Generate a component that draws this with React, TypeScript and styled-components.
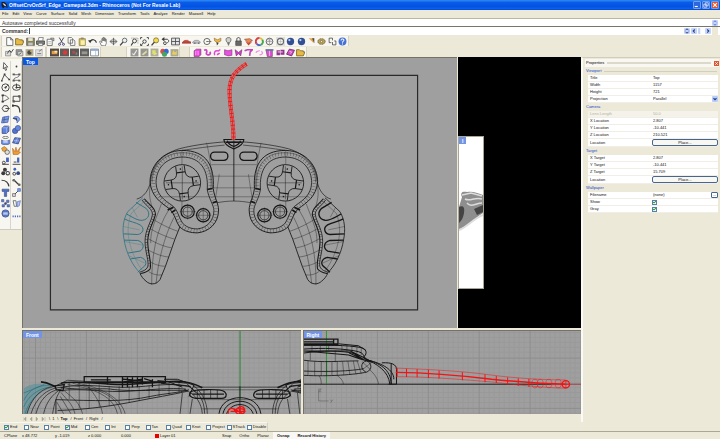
import React from "react";
import styled, { createGlobalStyle, css } from "styled-components";

const BEIGE = "#ece9d8";
const GREY = "#9f9f9f";
const INK = "#161616";

const Global = createGlobalStyle`
  * { box-sizing: border-box; }
  html, body, #root { height: 100%; margin: 0; }
  body { background: ${BEIGE}; overflow: hidden; }
  body, button, input, select {
    font-family: "Liberation Sans", Arial, sans-serif;
    font-size: 4px;
    line-height: 6px;
    color: #111;
  }
  button, input, select { margin: 0; padding: 0; border: 0; background: none; border-radius: 0; }
`;

const Window = styled.div`
  height: 100vh;
  display: flex;
  flex-direction: column;
  background: ${BEIGE};
`;

const TitleBar = styled.header`
  height: 10px;
  flex: none;
  display: flex;
  align-items: center;
  gap: 1px;
  padding: 0 1px;
  background: linear-gradient(#2f8cf5 0, #0a5be8 25%, #0453e0 65%, #0a62f4 90%, #0440b8);
  h1 {
    flex: 1;
    margin: 0;
    font-size: 5px;
    font-weight: bold;
    line-height: 8px;
    color: #fff;
    white-space: nowrap;
  }
`;

const CaptionButton = styled.button<{ $danger?: boolean }>`
  width: 8px;
  height: 8px;
  display: grid;
  border: 1px solid #6f9df0;
  border-radius: 1px;
  background: ${(p) => (p.$danger ? "#e2512b" : "#2f66dc")};
`;

const MenuBar = styled.nav`
  height: 8px;
  flex: none;
  display: flex;
  align-items: center;
  gap: 4px;
  padding: 0 2px;
  button { white-space: nowrap; }
`;

const CommandLine = styled.div<{ $bold?: boolean }>`
  height: ${(p) => (p.$bold ? 9 : 8)}px;
  flex: none;
  display: flex;
  align-items: center;
  gap: 1px;
  padding: 0 2px;
  background: #fff;
  border-top: 1px solid ${(p) => (p.$bold ? "#77756c" : "#b9b6a6")};
  font-size: 5px;
  color: #333;
  label { font-weight: bold; }
  input { flex: 1; min-width: 0; height: 6px; font-size: 5px; border-left: 1px solid #444; outline: none; }
  p { flex: 1; margin: 0; }
`;

const SpinButton = styled.button`
  width: 6px;
  height: 6px;
  display: grid;
  border-radius: 1px;
  background: #c4d4fb;
`;

const ToolRow = styled.div`
  height: 11px;
  flex: none;
  display: flex;
  padding-left: 1px;
`;

const ToolStrip = styled.div<{ $count: number; $width: number; $after?: number }>`
  width: ${(p) => p.$width}px;
  height: 10px;
  margin: 1px ${(p) => p.$after ?? 0}px 0 0;
  padding-left: 2px;
  display: grid;
  grid-template-columns: repeat(${(p) => p.$count}, 1fr);
  align-items: center;
  background: #f7f6f1;
  border-left: 1px solid #d6d3c3;
  border-right: 1px solid #d6d3c3;
`;

const ToolButton = styled.button`
  display: grid;
  place-items: center;
  svg { width: 9px; height: 9px; display: block; opacity: 0.88; }
`;

const Main = styled.main`
  flex: 1;
  min-height: 0;
  display: flex;
`;

const Palette = styled.aside`
  width: 22px;
  flex: none;
  align-self: flex-start;
  display: grid;
  grid-template-columns: 1fr 1fr;
  grid-auto-rows: 21px;
  margin-top: 2px;
  padding-top: 2px;
  background: #f7f6f1;
  border-bottom: 1px solid #cfccbc;
`;

const PalettePair = styled.div`
  display: grid;
  grid-template-rows: 11px 10px;
  border-right: 1px solid #d9d6c8;
`;

const Center = styled.section`
  flex: 1;
  min-width: 0;
  display: flex;
  flex-direction: column;
`;

const UpperViews = styled.div`
  flex: 272;
  min-height: 0;
  display: grid;
  grid-template-columns: 435fr 123fr;
  gap: 1px;
`;

const LowerViews = styled.div`
  flex: 84;
  min-height: 0;
  margin-top: 2px;
  display: grid;
  grid-template-columns: 1fr 1fr;
  gap: 2px;
`;

const Viewport = styled.div`
  position: relative;
  min-width: 0;
  min-height: 0;
  overflow: hidden;
  background: ${GREY};
  border-top: 1px solid #747267;
  border-left: 1px solid #747267;
  > svg { display: block; width: 100%; height: 100%; }
`;

const ViewLabel = styled.button<{ $active?: boolean }>`
  position: absolute;
  top: 0;
  left: 0;
  height: 7px;
  padding: 0 3px;
  background: ${(p) => (p.$active ? "#0a57e2" : "#7394e4")};
  color: #fff;
  font-size: 5px;
  font-weight: bold;
`;

const Backdrop = styled.div`
  background: #000;
  padding-top: 79px;
`;

const RenderView = styled(Viewport)`
  width: 26px;
  height: 153px;
  background: #fff;
  border: 1px solid #aaa695;
`;

const SheetTabs = styled.div`
  height: 8px;
  flex: none;
  display: flex;
  align-items: center;
  gap: 2px;
  padding: 1px 0 0 1px;
  svg { width: 24px; height: 4px; }
  button { padding-right: 1px; }
  button[aria-selected="true"] { font-weight: bold; }
`;

const Panel = styled.aside`
  width: 139px;
  flex: none;
  padding: 1px 1px 0 2px;
  border-left: 2px solid #fbfaf6;
  border-top: 1px solid #d0cdbc;
`;

const PanelHead = styled.header`
  height: 8px;
  display: flex;
  align-items: center;
  gap: 3px;
  padding-left: 1px;
  background: #f8f7f2;
  h2 { margin: 0; font-size: 4px; font-weight: normal; color: #000; }
  span { flex: 1; height: 2px; background: #dcd9cc; }
`;

const CloseButton = styled.button`
  width: 5px;
  height: 5px;
  display: grid;
  background: #dd5433;
`;

const Section = styled.fieldset`
  margin: 0;
  padding: 0 0 0 3px;
  border: 0;
  min-width: 0;
`;

const SectionTitle = styled.legend<{ $ruled?: boolean }>`
  display: flex;
  align-items: center;
  gap: 2px;
  width: 100%;
  height: 8px;
  padding: 0;
  margin-left: -2px;
  color: #1848cc;
  ${(p) => p.$ruled && css`&::after { content: ""; flex: 1; height: 1px; background: #d3cfbe; }`}
`;

const PropRow = styled.div<{ $tall?: boolean; $muted?: boolean }>`
  height: ${(p) => (p.$tall ? 8 : 7)}px;
  display: grid;
  grid-template-columns: 62px 1fr;
  align-items: center;
  padding-left: 2px;
  margin-right: 1px;
  background: ${(p) => (p.$muted ? "#f4f2e9" : "#fff")};
  border-bottom: 1px solid #f0eee6;
  white-space: nowrap;
  input[type="text"] { width: 100%; height: 6px; outline: none; padding-left: 1px; }
  ${(p) => p.$muted && css`&, input { color: #b5b2a4; }`}
`;

const PlaceButton = styled.button`
  height: 7px;
  border: 1px solid #46658f;
  border-radius: 2px;
  background: #f8f7f2;
  line-height: 4px;
`;

const SelectBox = styled.div`
  display: flex;
  align-items: center;
  select { flex: 1; height: 6px; appearance: none; padding-left: 1px; outline: none; }
  svg { width: 6px; height: 6px; background: #b9cdfa; border-radius: 1px; }
`;

const FileBox = styled.div`
  display: flex;
  align-items: center;
  button { width: 7px; height: 6px; flex: none; border: 1px solid #46658f; border-radius: 1px; line-height: 2px; }
`;

const Tick = styled.input.attrs({ type: "checkbox" })`
  appearance: none;
  width: 5px;
  height: 5px;
  margin: 0;
  flex: none;
  border: 1px solid #5580ac;
  background: #fff;
  &:checked::before {
    content: "";
    display: block;
    width: 3px;
    height: 3px;
    background: #1c9a25;
    clip-path: polygon(0 30%, 35% 60%, 100% 0, 100% 45%, 35% 100%, 0 75%);
  }
`;

const SnapBar = styled.div`
  width: 268px;
  height: 9px;
  flex: none;
  display: grid;
  grid-template-columns: repeat(13, 1fr);
  align-items: center;
  padding: 0 0 0 4px;
  border-top: 1px solid #f8f7f2;
  border-right: 1px solid #d5d2c1;
  label { display: flex; align-items: center; gap: 1px; white-space: nowrap; }
`;

const StatusBar = styled.footer`
  height: 8px;
  flex: none;
  display: flex;
  align-items: center;
  padding-left: 4px;
  border-top: 1px solid #aaa797;
`;

const StatusCell = styled.span<{ $width: number }>`
  width: ${(p) => p.$width}px;
  display: flex;
  align-items: center;
  gap: 1px;
  white-space: nowrap;
`;

const Swatch = styled.i`
  width: 4px;
  height: 4px;
  background: #e80000;
`;

const StatusToggle = styled.button<{ $on?: boolean }>`
  height: 7px;
  padding: 0 4px;
  font-weight: ${(p) => (p.$on ? "bold" : "normal")};
  background: ${(p) => (p.$on ? "#f9f8f4" : "transparent")};
`;

/* ---------- icons, all on a 16 x 16 field ---------- */

const K = "#222";
const B = "#2c50b8";
const ln = { fill: "none", stroke: K, strokeWidth: 1.6 } as const;

const icons: Record<string, React.ReactNode> = {
  new: <path d="M3 1h7l4 4v10H3zM10 1v4h4" fill="#fff" stroke="#444" strokeWidth="1.4" />,
  open: <path d="M1 13V3h5l2 2h5v2h3l-3 7H1z" fill="#e3b32e" stroke="#5c4300" strokeWidth="1.3" />,
  save: <><path d="M1 2h14v13H1z" fill="#7a7446" stroke="#333" /><path d="M4 2h8v5H4z" fill="#e8e6d0" /><path d="M4 10h8v5H4z" fill="#bbb" /></>,
  print: <><path d="M4 6l1-5h8l-1 5" fill="#fff" stroke={K} /><path d="M1 7h14v6H1z" fill="#777" stroke={K} strokeWidth="1.4" /><path d="M4 11h8v4H4z" fill="#eee" stroke={K} /></>,
  doc: <><path d="M2 4h9v11H2z" fill="#fff" stroke="#444" strokeWidth="1.4" /><path d="M8 2h6v5l-3-2z" fill="#ccc" stroke={K} /><path d="M4 8h5M4 11h5" stroke="#888" /></>,
  cut: <><path d="M4 1l6 10M12 1L6 11" {...ln} stroke="#223" /><circle cx="4.500" cy="13" r="1.800" {...ln} stroke="#226" /><circle cx="11.500" cy="13" r="1.800" {...ln} stroke="#226" /></>,
  copy: <path d="M2 1h6l2 2v8H2zM6 5h6l2 2v8H6z" fill="#fff" stroke="#444" strokeWidth="1.3" />,
  paste: <><path d="M2 3h11v12H2z" fill="#d8bd3c" stroke="#5b4a0b" /><path d="M5 1h5v3H5z" fill="#777" /><path d="M5 6h7v8H5z" fill="#f8f0a8" /></>,
  undo: <><path d="M4 8c3-5 9-4 11 2" {...ln} strokeWidth="2.200" /><path d="M0 6l7-1-3 6z" fill={K} /></>,
  pan: <path d="M4 15L1 8l2-1 2 3V3h2v4-6h2v6-5h2v6-4h2v7l-2 5z" fill="#fff" stroke="#333" strokeWidth="1.1" />,
  rotate: <><path d="M8 2v12M2 8h12" {...ln} strokeWidth="1.100" /><ellipse cx="8" cy="8" rx="6" ry="3" {...ln} strokeWidth="1.100" /><path d="M6 4h4L8 1zM6 12h4l-2 3z" fill="#555" /></>,
  zoom: <><circle cx="10" cy="6" r="4" fill="#e6f0fa" stroke="#444" strokeWidth="1.5" /><path d="M7 9l-5 6" {...ln} strokeWidth="2.200" /></>,
  zoomw: <><circle cx="8" cy="7" r="3.500" {...ln} /><path d="M5 10l-3 5" {...ln} strokeWidth="2" /><path d="M2 2h12v10" fill="none" stroke="#555" strokeDasharray="2 1" /></>,
  zoome: <><circle cx="8" cy="8" r="3" {...ln} /><path d="M1 4V1h3M12 1h3v3M15 12v3h-3M4 15H1v-3M6 10l-4 5" {...ln} /></>,
  zooms: <><circle cx="9" cy="6" r="4.500" fill="#f4d73c" stroke="#6b5a16" strokeWidth="1.400" /><path d="M6 9l-5 6" {...ln} strokeWidth="2.200" /></>,
  back: <><path d="M3 4h8c4 1 3 6 0 6" {...ln} /><path d="M6 0L1 4l5 4z" fill={K} /><circle cx="7" cy="11" r="2.500" {...ln} /></>,
  grid: <path d="M1 2h14v12H1zM8 2v12M1 8h14" fill="#dfe3ea" stroke="#333" strokeWidth="1.5" />,
  car: <path d="M0 11l2-3 3-2h5l3 2 3 1v2z" fill="#c72a1d" stroke="#701109" />,
  layers: <><path d="M1 9l4-3h6l4 3-2 2H2z" fill="#bbb" stroke="#778" strokeWidth="1.200" /><circle cx="5" cy="11" r="1.500" fill="#667" /><circle cx="12" cy="11" r="1.500" fill="#667" /></>,
  circ: <><circle cx="7" cy="8" r="5.500" {...ln} strokeWidth="1.300" /><path d="M7 8h8" stroke={K} /><circle cx="7" cy="8" r="1" fill={K} /></>,
  select: <><path d="M2 2l6 3 6-3v5l-6 3-5-3z" fill="#f0b12d" stroke="#7a5410" /><path d="M6 9l1 6 3-4z" fill={K} /></>,
  bulb: <><path d="M8 1c6 0 5 6 2 9H6C3 7 2 1 8 1z" fill="#ccc" stroke="#444" strokeWidth="1.400" /><path d="M6 12h4M7 14h2" {...ln} /></>,
  lock: <><path d="M5 7V4c0-4 6-4 6 0v3" {...ln} /><path d="M3 7h10v8H3z" fill="#555" stroke={K} /></>,
  shade: <><path d="M1 4l7 7 7-5-5-3z" fill="#ef7d37" stroke="#6a1d09" /><path d="M2 7l6 8 7-7-7 3z" fill="#c22a1a" /></>,
  wheel: <g fill="none" strokeWidth="3.500"><path d="M8 2a6 6 0 0 1 5 3" stroke="#e4b422" /><path d="M13 5a6 6 0 0 1-3 9" stroke="#2aa038" /><path d="M10 14a6 6 0 0 1-7-2" stroke="#2b4fd0" /><path d="M3 12a6 6 0 0 1 5-10" stroke="#d6262b" /></g>,
  sphere: <><circle cx="8" cy="8" r="6" fill="#eee" stroke="#444" strokeWidth="1.500" /><path d="M8 2v12M2 8h12M4 4c3 2 5 2 8 0" fill="none" stroke="#777" /></>,
  sphere2: <><path d="M0 0h16v16H0z" fill="#ddd" /><circle cx="8" cy="8" r="5.500" fill="#f5f5f5" stroke="#555" strokeWidth="2" /><path d="M8 3v10M3 8h10" stroke="#aaa" /></>,
  ball: <><circle cx="8" cy="8" r="6.500" fill="#193a86" /><circle cx="6" cy="5.500" r="2" fill="#b8cdf8" /></>,
  spot: <><path d="M3 2h9v9z" fill="#e79b2c" /><path d="M9 2h4v9z" fill="#333" /></>,
  gear: <><ellipse cx="8" cy="8" rx="6.500" ry="5" fill="#b49a45" stroke="#4a3b0c" strokeWidth="1.500" strokeDasharray="2 1" /><circle cx="8" cy="8" r="2" fill="#f3ecd0" stroke="#4a3b0c" /></>,
  dim: <path d="M2 2v8h4M2 2h6v4M8 9v5h6V7h-3" {...ln} strokeWidth="1.300" />,
  help: <><circle cx="8" cy="8" r="7" fill="#2f5fd0" /><path d="M5.500 6c0-4 5.500-3 5 0-.5 1.500-2.500 2-2.500 4M8 11.500v2" fill="none" stroke="#fff" strokeWidth="1.800" /></>,
  cplane: <><path d="M1 6h9v8H1z" fill="#d8d8d8" stroke="#555" /><path d="M4 10l4-6 3 4 4-6" {...ln} /></>,
  cplane2: <><path d="M2 3h10v9H2z" fill="#999" stroke="#333" /><path d="M5 6h9v8H5z" fill="#d4d4d4" stroke="#444" /><path d="M7 12l4-4" {...ln} /></>,
  cplane3: <><path d="M1 2h14v12H1z" fill="#aaa38a" /><circle cx="8" cy="8" r="4" fill="#333" /><path d="M8 5h4v4z" fill="#d5b444" /></>,
  cplane4: <><path d="M1 3h12v11H1z" fill="#ddd" stroke="#999" /><path d="M4 10h7M7 6l6-4" stroke="#666" strokeWidth="1.600" /></>,
  film: <><path d="M0 1h16v14H0z" fill="#3c332b" /><path d="M3 5h10v6H3z" fill="#e29330" /><path d="M8 5h5v3H8z" fill="#f6e5b8" /></>,
  film2: <><path d="M0 1h16v14H0z" fill="#4b4745" /><circle cx="9" cy="8" r="4" fill="#d91f1f" /></>,
  film3: <><path d="M0 1h16v14H0z" fill="#444" /><path d="M4 5h5v5H4z" fill="#a33" /><path d="M10 8h3v4h-3z" fill="#777" /></>,
  film4: <><path d="M0 1h16v14H0z" fill="#4b4b4b" /><path d="M3 6h10v5H3z" fill="#8c8c84" /></>,
  pane: <><path d="M1 2h14v12H1z" fill="#fff" stroke="#567" strokeWidth="1.400" /><path d="M1 2h14v3H1z" fill="#7b9cce" /><path d="M10 5v9" stroke="#89a" /></>,
  tex: <><path d="M1 1h14v14H1z" fill="#8b8b86" /><path d="M4 10l3 2 5-8" fill="none" stroke="#eee" strokeWidth="2" /></>,
  tex2: <><path d="M1 1h14v14H1z" fill="#8b8b80" /><path d="M3 11l9-7v4l-6 5z" fill="#d8d6a2" /></>,
  tex3: <><path d="M1 1h14v14H1z" fill="#a3a391" /><path d="M4 4h6v4l3 2-5 3-4-3z" fill="#dede5e" /></>,
  rgb: <><circle cx="5" cy="6" r="4.500" fill="#d83826" /><circle cx="11" cy="6" r="4.500" fill="#2451cf" /><circle cx="8" cy="11" r="4.500" fill="#2c9a4d" /></>,
  tex4: <><path d="M1 2h14v13H1z" fill="#9f9d89" /><path d="M4 9l2-5 3 4 3-3v7H4z" fill="#e9c941" /></>,
  mA: <><path d="M2 5l4-3h8v10l-3 3H2z" fill="#e627d8" stroke="#5b0b56" /><path d="M5 5v8M9 5v8" stroke="#fff" /></>,
  mB: <path d="M2 4c6-3 5 3 4 5s3 4 5 3 3-3 1-5" fill="none" stroke="#c92ac0" strokeWidth="3" />,
  mC: <path d="M3 13c-2-6 2-9 5-8s3-2 5-2M7 12l5-3" fill="none" stroke="#df2fd2" strokeWidth="2.600" />,
  mD: <path d="M1 3l6 2 7-2v10l-6 1-7-2z" fill="#e93adf" stroke="#6b0f66" />,
  mE: <path d="M2 3l6 5 6-5-2 11-4-4-4 4z" fill="#d12ac8" stroke="#5b0b56" />,
  mG: <path d="M1 5l5-2h9l-4 4-1 7" fill="none" stroke="#bb2bb3" strokeWidth="2.800" />,
  mH: <path d="M2 9c0-5 6-2 6-5M8 12c6 0 7-4 3-6" fill="none" stroke="#f08be8" strokeWidth="2.400" />,
  mI: <><path d="M2 4h11v11H4z" fill="#e03ad4" stroke="#5b0b56" /><path d="M1 2h14v3H1z" fill="#4a6a86" /><path d="M8 5v9" stroke="#f6b5f1" strokeWidth="1.400" /></>,
  mJ: <><path d="M1 4h6v9H1zM8 3h7v9H8z" fill="#861a80" /><path d="M3 7h9" stroke="#f2b9ef" strokeWidth="2" /></>,
  mK: <><path d="M6 2l9 2-5 10-9-3z" fill="#cc37c2" stroke="#5b0b56" strokeWidth="1.500" /><path d="M6 6l4 1-2 3" fill="none" stroke="#f6b5f1" strokeWidth="1.500" /></>,
  arrow: <path d="M5 1l7 8H8l2 5-2 1-2-5-2 2z" fill="#fff" stroke={K} strokeWidth="1.400" />,
  point: <circle cx="8" cy="8" r="1.600" fill={K} />,
  poly: <><path d="M1 14L6 3l8 8" {...ln} /><path d="M5 1h3v3H5zM0 13h3v2H0zM13 10h3v3h-3z" fill={K} /></>,
  curve: <><path d="M3 13C3 6 13 10 13 3M3 3h9M4 13h9" {...ln} strokeWidth="1.200" /><path d="M1 1h4v3H1zM11 1h4v3h-4zM1 12h4v3H1zM11 12h4v3h-4z" fill="#444" /></>,
  circle: <><circle cx="8" cy="8" r="6.500" {...ln} /><path d="M8 8l4-4M7 7h2v2H7z" {...ln} /></>,
  ellipse: <><ellipse cx="8" cy="8" rx="7" ry="5" {...ln} /><path d="M8 1v7h7M7 7h2v2H7z" {...ln} /></>,
  arc: <><path d="M3 2c5 0 9 3 11 6L3 14M3 2v12" {...ln} strokeWidth="1.300" /><path d="M1 1h4v3H1zM1 12h4v3H1z" fill={K} /></>,
  rect: <><path d="M2 4h12v9H2z" {...ln} /><path d="M1 11h4v4H1zM11 2h4v4h-4z" fill="#444" /></>,
  polygon: <><path d="M5 3h6l3 5-3 5H5L2 8z" {...ln} /><path d="M8 8h7" {...ln} /></>,
  fillet: <><path d="M1 3h5c6 0 8 4 8 12" {...ln} strokeWidth="2.200" /><path d="M0 1h3v4H0z" fill={K} /></>,
  surf: <><path d="M3 4l11-2-2 11-11 1z" fill="#6f8fe0" stroke={B} strokeWidth="1.500" /><path d="M6 3L5 14M2 9l11-2" stroke="#1a2b66" /></>,
  surf2: <><path d="M2 6c2-5 11-5 12 2l-5 6V9z" fill="#7d9ae8" stroke={B} strokeWidth="1.400" /><path d="M2 6h6v4" {...ln} /></>,
  box: <><path d="M2 5l4-3h8v9l-4 4H2z" fill="#4a72d8" stroke="#1b2e74" strokeWidth="1.300" /><path d="M2 5h8v10M10 5l4-3" fill="none" stroke="#b9c9f6" /></>,
  balls: <><circle cx="5.500" cy="10.500" r="4.800" fill="#3c62cc" stroke="#152a6b" /><circle cx="10.500" cy="5.500" r="4.800" fill="#5378dc" stroke="#152a6b" /></>,
  cyl: <><ellipse cx="8" cy="2.500" rx="5" ry="2" {...ln} strokeWidth="1.100" /><path d="M1 7c4 3 10 3 14 0v7c-4 2-10 2-14 0z" fill="#5b82e4" stroke="#1d3380" /><path d="M4 9h8v3H4z" fill="#c2d2fa" /></>,
  mesh: <><path d="M5 3l10 1-4 10L1 12z" fill="#4a70d4" stroke="#1a2e72" strokeWidth="1.400" /><path d="M3 8l10 1M10 3L6 13" stroke="#bccbf6" /></>,
  join: <><path d="M1 4l5-3 5 4-3 5-5-1z" fill="#ee9a1c" stroke="#8b5205" /><circle cx="11" cy="11" r="4" fill="#ddd" stroke="#444" strokeWidth="1.400" /></>,
  explode: <path d="M2 15L1 4l4 6 2-8 2 8 6-8-3 8 3 1-4 4z" fill="#f0901a" stroke="#a04a02" />,
  trim: <><path d="M2 13h12" {...ln} /><path d="M9 1h5v8H9z" fill={B} /><circle cx="5" cy="10" r="2.500" {...ln} /></>,
  split: <><path d="M1 13h14M3 9h5" {...ln} /><path d="M9 1h4v9H9z" fill={B} /></>,
  group: <><circle cx="7" cy="5" r="3.500" fill={K} /><circle cx="4" cy="11" r="3.500" fill={K} /><circle cx="12" cy="11" r="3" fill="#fff" stroke={K} strokeWidth="1.800" /></>,
  ungroup: <><circle cx="5" cy="4" r="2.500" fill={B} /><circle cx="4" cy="12" r="2.500" {...ln} /><circle cx="11" cy="11" r="3.300" fill="#1c3176" /></>,
  edit: <path d="M1 4c7 0 12 4 13 11" {...ln} strokeWidth="2.200" />,
  bone: <><path d="M3 3l10 10" {...ln} strokeWidth="2.200" /><circle cx="3" cy="4" r="2.400" fill="#555" /><circle cx="13" cy="12" r="2.400" fill="#555" /></>,
  text: <path d="M2 2h12v4h-4v9H6V6H2z" fill="#345cc8" stroke="#152a6b" />,
  move: <><path d="M5 11l6-6" {...ln} /><path d="M1 10h5v5H1z" fill="#ddd" stroke={K} /><path d="M10 1h5v5h-5z" fill="#6a8de6" stroke={B} /></>,
  array: <g fill="#4a70d4" stroke="#1a2e72"><path d="M1 1h4v4H1zM10 2h4v4h-4zM2 10h4v4H2zM11 10h4v4h-4z" /><circle cx="8" cy="8" r="2" fill="#333" /></g>,
  flip: <><path d="M2 3h5l1 10H4z" fill="#fff" stroke="#444" strokeWidth="1.400" /><path d="M9 5l6-2-2 9-4 2z" fill="#a7bbf0" stroke={B} /></>,
  barrel: <><circle cx="8" cy="8" r="6.500" fill="#4e75da" stroke="#1a2e72" /><path d="M3 5h10v6H3z" fill="#a9bff6" stroke="#1a2e72" /></>,
  points: <path d="M1 13h14" stroke="#2c50b8" strokeWidth="3" strokeDasharray="2 2" />,
};

const Tool = ({ name }: { name: string }) => (
  <ToolButton type="button" aria-label={name}>
    <svg viewBox="0 0 16 16">{icons[name]}</svg>
  </ToolButton>
);

const Strip = ({ names, width, after }: { names: string; width: number; after?: number }) => {
  const list = names.split(" ");
  return (
    <ToolStrip $count={list.length} $width={width} $after={after} role="toolbar">
      {list.map((n, i) => <Tool key={i} name={n} />)}
    </ToolStrip>
  );
};

/* ---------- wireframes ---------- */

const GripShell = ({ color }: { color: string }) => {
  const heavy = color === INK ? 4 : 3;
  return (
    <g stroke={color} fill="none">
      <path d="M290 203L335 245C350 270 352 300 346 330C340 370 320 410 296 432" strokeWidth="2.400" />
      <path d="M283 212L324 250C334 275 336 300 332 326C326 362 310 398 290 424M322 232L306 262M348 290L300 300M346 335L290 346M332 378L284 400" strokeWidth="1" />
      <g strokeWidth={heavy}>
        <path d="M310 217L280 235C265 250 272 268 290 271C305 273 320 262 339 252" />
        <path d="M345 267C330 275 310 278 298 285C282 295 290 312 305 314L348 312" />
        <path d="M346 331L305 332C285 338 284 355 298 364L334 370" />
        <path d="M328 388L297 383C278 388 275 405 290 414L305 428" />
      </g>
    </g>
  );
};

const HalfPad = ({ shell }: { shell: string }) => (
  <g fill="none" stroke={INK} strokeWidth="1.700">
    <path d="M16 33C60 34 130 42 180 55C230 70 262 105 266 150C270 180 288 202 308 207" strokeWidth="2" />
    <path d="M44 44C90 48 130 54 172 60M16 213C35 213 50 215 66 218" />
    <path d="M98 37C88 80 84 110 80 175M60 132C65 170 70 195 72 210" strokeWidth="1.100" />
    <path d="M16 103H84M16 138H80M16 173H80M16 200H240M172 62V104M172 212V236" strokeWidth="1" />
    <path d="M78 175C74 110 95 60 172 60C235 62 268 110 268 155C264 200 235 218 210 236C195 248 190 275 180 290C165 305 145 309 125 309C90 305 62 280 62 240C62 220 74 205 78 175Z" strokeWidth="2.800" />
    <path d="M87 176C83 115 105 70 172 70C230 72 259 114 259 157C256 198 230 214 206 231C190 243 186 268 175 285C160 300 142 303 125 303C92 300 69 275 69 241C69 222 83 205 87 176Z" strokeWidth="11" strokeDasharray="1 8" opacity="0.800" />
    <path d="M96 178C92 120 115 80 172 80C225 82 250 118 250 158C248 195 225 210 202 226C185 238 182 262 170 280C155 295 140 297 125 297C95 294 76 270 76 242C76 225 92 205 96 178Z" strokeWidth="2.400" />
    <path d="M85 176C80 112 104 66 172 67C232 69 262 112 262 157" strokeWidth="1.200" />
    <path d="M80 175L96 178M66 214L80 218M192 240L204 248M198 232L215 240" strokeWidth="5" />
    <rect x="34" y="65" width="52" height="25" rx="12" strokeWidth="4" />
    <circle cx="171" cy="158" r="55" strokeWidth="2.600" />
    <path d="M171 108V208M122 158H220" strokeWidth="1.300" />
    <g transform="rotate(8 171 158)" strokeWidth="2.500">
      <path d="M158 106V124Q158 145 138 145H119M184 106V124Q184 145 204 145H223M158 210V192Q158 171 138 171H119M184 210V192Q184 171 204 171H223" />
      <path d="M158 126H184M158 190H184M139 145V171M203 145V171" strokeWidth="3.600" />
      <path d="M169 114h4v4h-4zM169 198h4v4h-4zM127 156h4v4h-4zM211 156h4v4h-4z" fill={INK} stroke="none" />
    </g>
    {[[108, 256], [155, 245]].map(([x, y]) => (
      <g key={x}>
        <circle cx={x} cy={y} r="20" strokeWidth="3.600" />
        <circle cx={x} cy={y} r="14" strokeWidth="2" />
        <path d={`M${x - 24} ${y}h48M${x} ${y - 24}v48`} strokeWidth="1" />
      </g>
    ))}
    <path d="M178 290C200 340 215 400 238 450C250 468 270 465 280 455C290 447 294 440 298 432" strokeWidth="2.600" />
    <path d="M285 206C270 225 250 235 252 255C258 280 275 300 275 335C275 370 262 400 268 418C275 428 288 430 298 432" strokeWidth="3.200" />
    <path d="M292 210C278 230 259 238 261 255C266 280 283 300 283 335C283 368 270 396 275 412C280 422 290 425 300 428" strokeWidth="2.400" />
    <path d="M288 208C274 227 254 236 256 255C262 280 279 300 279 335C279 369 266 398 271 415" strokeWidth="7" strokeDasharray="1 7" />
    <path d="M196 262C225 320 243 390 250 462M212 240C250 300 264 380 263 466M234 222C248 262 268 300 266 340M185 304C210 296 240 280 256 270M194 328C225 320 255 304 268 296M204 354C232 350 260 334 275 326M212 382C235 380 262 368 274 360M222 410C240 410 260 402 268 396M232 436C246 438 262 434 272 426M266 160C272 190 270 200 262 232" strokeWidth="1.200" />
    <GripShell color={shell} />
  </g>
);

const CABLE = "M246 63C236 69 229 76 229 90C229 106 233 120 233 139";

const TopDrawing = () => (
  <svg viewBox="22 57 435 272" preserveAspectRatio="none">
    <path d="M49.500 74.500H417.500V310.500H49.500Z" fill="none" stroke="#2a2a2a" strokeWidth="1.200" />
    <g transform="translate(228 130) scale(0.3333)">
      <HalfPad shell={INK} />
      <g transform="translate(32 0) scale(-1 1)"><HalfPad shell="#2f7483" /></g>
      <path d="M16 30V213" stroke={INK} strokeWidth="2.600" />
      <path d="M-14 27H46C46 42 30 50 16 56C2 50-14 42-14 27ZM-8 36H40M-4 31C0 42 8 46 16 48C24 46 32 42 36 31" fill="none" stroke={INK} strokeWidth="3.400" />
    </g>
    <g fill="none">
      <path d={CABLE} stroke="#e83030" strokeWidth="4" />
      <path d={CABLE} stroke="#bd7b7b" strokeWidth="2.800" />
      <path d={CABLE} stroke="#f01818" strokeWidth="4" strokeDasharray="1 3" />
      <path d={CABLE} stroke="#f01818" strokeWidth="0.900" />
    </g>
  </svg>
);

const GridLines = ({ id, x }: { id: string; x: number }) => (
  <>
    <defs>
      <pattern id={id} x={x} y="1" width="51" height="51" patternUnits="userSpaceOnUse">
        <path d="M5.500 0V51M10.500 0V51M15.500 0V51M20.500 0V51M25.500 0V51M30.500 0V51M35.500 0V51M40.500 0V51M45.500 0V51M0 5.500H51M0 10.500H51M0 15.500H51M0 20.500H51M0 25.500H51M0 30.500H51M0 35.500H51M0 40.500H51M0 45.500H51" stroke="#999" strokeWidth="1" />
        <path d="M.5 0V51M0 .5H51" stroke="#8d8d8d" strokeWidth="1" />
      </pattern>
    </defs>
    <rect x="0" y="300" width="600" height="130" fill={`url(#${id})`} />
  </>
);

const FrontBody = () => (
  <g fill="none" stroke={INK} strokeWidth="2">
    <path d="M78 285C90 240 120 205 160 202L200 183L250 186M90 285C105 235 140 208 175 205M105 285C115 245 140 215 178 210M128 285C135 250 155 225 180 210M155 285C160 255 165 230 185 205" />
    <path d="M120 188C145 190 150 198 165 203" strokeWidth="5" />
    <path d="M162 200L190 196L186 215L166 212Z" strokeWidth="4" />
    <path d="M250 172H494V190H250ZM320 172V196M365 172V206M425 172V196M455 180V204" strokeWidth="4" />
    <path d="M270 182H330M366 180L425 184M366 188L425 180M380 174V204M395 174V204M410 174V204M430 178L455 186M250 188H494" strokeWidth="4" />
    <path d="M180 192C230 182 300 196 360 196C420 196 480 186 530 186C565 186 585 195 605 206" strokeWidth="5" />
    <path d="M175 205C260 190 330 208 390 204C450 202 500 190 560 200M175 215C240 205 320 222 390 216C450 212 510 205 556 210M180 205C250 215 300 206 330 210C380 218 480 212 560 214" strokeWidth="2.500" />
    <path d="M165 242C280 245 370 250 450 232C500 222 530 222 565 212M170 275C260 272 330 262 410 246C460 236 510 228 562 216M165 242V285" strokeWidth="2.500" />
    <path d="M200 196C255 205 335 220 350 285M215 192C285 210 350 225 362 285M230 192C300 205 360 235 373 285M190 215C220 240 235 250 245 285M180 220C200 245 215 255 222 285M260 200C285 230 300 255 305 285M178 232L210 285M168 250L188 285" strokeWidth="1.500" />
    <path d="M205 188V240M235 188V268M265 188V270M295 196V266M325 200V262M355 200V256M385 200V250M415 200V246M445 198V240M475 192V232M505 188V228M535 188V222" strokeWidth="1.300" />
    <path d="M470 184L560 192M480 192L570 202M490 180H530L580 198L565 232M500 186L545 204M560 195L585 220" strokeWidth="3" />
    <path d="M560 200C590 215 612 240 612 285M575 196C600 215 620 245 620 285M550 210C590 228 602 255 605 285M545 222L538 285M575 240L568 285" />
    <path d="M580 204H718" strokeWidth="2" />
    <path d="M590 212H718M718 202V285M600 242H718M605 270H660" strokeWidth="1.300" />
    <path d="M570 218C580 210 660 208 672 218C680 226 678 238 664 238H585C570 236 562 228 570 218ZM575 225H670" strokeWidth="3.600" />
    <path d="M590 214V238M610 212V238M630 212V238M650 212V238" strokeWidth="2" />
  </g>
);

const FrontDrawing = () => (
  <svg viewBox="22 331 278 84" preserveAspectRatio="none">
    <GridLines id="front-grid" x={34} />
    <path d="M239.500 331V400" stroke="#2d8a34" strokeWidth="1" />
    <g transform="translate(0 320) scale(0.3333)">
      <path d="M68 208C85 195 115 188 148 200C120 208 90 240 80 285H68Z" fill="#4f8f99" opacity="0.550" />
      <path d="M68 245C85 210 110 198 150 198M68 265C80 235 105 210 150 202M72 285C82 250 110 215 155 204M68 222L130 196" fill="none" stroke="#2b7380" strokeWidth="2" />
      <FrontBody />
      <g transform="translate(1436 0) scale(-1 1)"><FrontBody /></g>
      <g fill="none" stroke={INK} strokeWidth="3">
        <path d="M655 285C660 250 690 236 718 236C746 236 776 250 781 285M667 285C672 260 694 247 718 247C742 247 764 260 769 285M678 285C684 268 700 257 718 257C736 257 752 268 758 285" />
      </g>
      <g fill="none" stroke="#f01212" strokeWidth="4">
        <path d="M683 285C680 265 700 264 705 280C708 262 730 258 732 272C734 290 712 290 706 280C690 270 735 262 732 280M700 270L728 285M718 262V285M690 278H735" />
      </g>
    </g>
  </svg>
);

const RightDrawing = () => (
  <svg viewBox="302 331 278 84" preserveAspectRatio="none">
    <GridLines id="right-grid" x={324} />
    <path d="M324.500 331V384" stroke="#2d9a34" strokeWidth="1" />
    <g transform="translate(290 320) scale(0.3333)" fill="none" stroke={INK} strokeWidth="2">
      <path d="M36 195H780" strokeWidth="3" />
      <path d="M780 195H870" stroke="#a33a3a" strokeWidth="3" />
      <path d="M36 58H138V76H36M36 66H125M125 58V76M36 72H138" strokeWidth="4" />
      <path d="M36 76C90 76 170 75 210 84C228 90 224 108 214 112M36 88C90 84 160 86 200 96C212 100 218 106 220 120M140 72L200 78L222 92M36 100C90 92 150 92 190 102" strokeWidth="3" />
      <path d="M36 94H175L220 116L240 128L205 118L170 106ZM172 100L215 120M180 98L222 124" strokeWidth="3.500" />
      <path d="M150 74V92M165 76V96M180 78V98M195 80V102M208 84V106M60 78V96M85 78V94M110 78V92M130 92V128M55 95V122" strokeWidth="1.300" />
      <path d="M36 122C90 130 150 124 200 124M36 168C110 172 190 166 225 158C242 150 240 130 224 124C205 128 205 150 222 158M36 155C110 158 175 155 215 148" strokeWidth="2.600" />
      <path d="M48 124V168M68 126V169M88 126V170M104 126V169M120 126V169M136 126V169C150 178 155 190 154 195M152 126L156 168M168 125L174 167M184 124L192 165M196 124L208 163M82 170C88 178 88 190 88 195M232 150C250 165 258 180 260 195M210 126L235 150M238 130L212 150" strokeWidth="1.300" />
      <path d="M222 120C262 130 298 150 298 195M230 122C270 132 306 150 306 180M215 116C255 132 290 155 294 195M270 130C300 128 314 135 314 150V195M298 132V195M290 195H314" strokeWidth="3" />
      <g stroke="#f51212">
        <path d="M312 146C420 150 520 156 590 166C680 178 760 182 822 182M312 172C420 172 520 182 600 188C680 198 760 206 822 207" strokeWidth="1.500" />
        <path d="M312 159C430 160 520 170 600 180C680 188 750 194 822 195" strokeWidth="4.500" />
        <path d="M316 146V172M344 148V173M376 149V174M410 151V176M442 153V178M512 158V183M580 165V189M614 170V191M648 174V196M680 177V200M712 179V203" strokeWidth="3" />
        {[730, 746, 772, 800].map((x) => <ellipse key={x} cx={x} cy="193" rx="9" ry="13" strokeWidth="1.500" />)}
        <circle cx="823" cy="195" r="11" strokeWidth="4" />
        <path d="M823 182V208M810 195H834" strokeWidth="2" />
      </g>
      <path d="M80 210V246H110M80 210h8l-8 8h8M115 242l4 5 4-5M119 247l-3 5" stroke="#666" strokeWidth="2" />
    </g>
  </svg>
);

const RenderDrawing = () => (
  <svg viewBox="0 0 24 151" preserveAspectRatio="none">
    <path d="M3 60C1 56 3 54 8 55C14 54 18 56 24 58V76C18 80 12 86 7 89C4 91 2 92 0 92V70Z" fill="#8e8e8e" />
    <path d="M0 70C4 68 6 70 5 76C4 82 2 84 0 86ZM15 72l9-4v7l-6 3z" fill="#444" />
    <path d="M3 58l9-2 11 3M6 62c5 3 9-2 17 0M8 66c4 5 9 0 15 0" stroke="#dcdcdc" strokeWidth="1.500" fill="none" />
    <path d="M0 93C8 90 14 82 24 78" stroke="#ddd" strokeWidth="2" fill="none" />
  </svg>
);

/* ---------- properties panel ---------- */

const TextProp = ({ id, label, value, muted }: { id: string; label: string; value: string; muted?: boolean }) => (
  <PropRow $muted={muted}>
    <label htmlFor={id}>{label}</label>
    <input id={id} type="text" defaultValue={value} disabled={muted} />
  </PropRow>
);

const PlaceProp = ({ id }: { id: string }) => (
  <PropRow $tall>
    <label htmlFor={id}>Location</label>
    <PlaceButton id={id} type="button">Place...</PlaceButton>
  </PropRow>
);

const Properties = () => (
  <Panel>
    <PanelHead>
      <h2>Properties</h2>
      <span />
      <CloseButton type="button" aria-label="Close panel">
        <svg viewBox="0 0 8 8"><path d="M2 2l4 4M6 2L2 6" stroke="#fff" strokeWidth="1.400" /></svg>
      </CloseButton>
    </PanelHead>
    <Section>
      <SectionTitle $ruled>Viewport</SectionTitle>
      <TextProp id="title" label="Title" value="Top" />
      <TextProp id="width" label="Width" value="1157" />
      <TextProp id="height" label="Height" value="721" />
      <PropRow>
        <label htmlFor="projection">Projection</label>
        <SelectBox>
          <select id="projection"><option>Parallel</option><option>Perspective</option></select>
          <svg viewBox="0 0 8 8"><path d="M2 3l2 2 2-2" fill="none" stroke="#24407c" strokeWidth="1.500" /></svg>
        </SelectBox>
      </PropRow>
    </Section>
    <Section>
      <SectionTitle>Camera</SectionTitle>
      <TextProp id="lens" label="Lens Length" value="50.0" muted />
      <TextProp id="cx" label="X Location" value="2.807" />
      <TextProp id="cy" label="Y Location" value="-10.441" />
      <TextProp id="cz" label="Z Location" value="210.521" />
      <PlaceProp id="camera-place" />
    </Section>
    <Section>
      <SectionTitle>Target</SectionTitle>
      <TextProp id="tx" label="X Target" value="2.807" />
      <TextProp id="ty" label="Y Target" value="-10.441" />
      <TextProp id="tz" label="Z Target" value="15.709" />
      <PlaceProp id="target-place" />
    </Section>
    <Section>
      <SectionTitle>Wallpaper</SectionTitle>
      <PropRow>
        <label htmlFor="file">Filename</label>
        <FileBox>
          <input id="file" type="text" defaultValue="(none)" />
          <button type="button" aria-label="Browse">...</button>
        </FileBox>
      </PropRow>
      <PropRow><label htmlFor="show">Show</label><Tick id="show" defaultChecked /></PropRow>
      <PropRow><label htmlFor="gray">Gray</label><Tick id="gray" defaultChecked /></PropRow>
    </Section>
  </Panel>
);

const MENUS = ["File", "Edit", "View", "Curve", "Surface", "Solid", "Mesh", "Dimension", "Transform", "Tools", "Analyze", "Render", "Maxwell", "Help"];
const SNAPS = ["End", "Near", "Point", "Mid", "Cen", "Int", "Perp", "Tan", "Quad", "Knot", "Project", "STrack", "Disable"];
const PALETTE = ["arrow point poly curve", "circle ellipse arc rect", "polygon fillet surf surf2", "box balls cyl mesh", "join explode trim split", "group ungroup edit bone", "text move array flip", "barrel points"];

export default function App() {
  return (
    <Window>
      <Global />
      <TitleBar>
        <svg width="7" height="8" viewBox="0 0 14 16"><path d="M1 2h6l5 5 1 7-5-3-4 4-3-6z" fill="#1d1d1d" /><path d="M3 4l5 2 3 5-5-2z" fill="#ddd" /></svg>
        <h1>OffsetCrvOnSrf_Edge_Gamepad.3dm - Rhinoceros (Not For Resale Lab)</h1>
        <CaptionButton type="button" aria-label="Minimize"><svg viewBox="0 0 8 8"><path d="M1 6h4" stroke="#fff" strokeWidth="1.500" /></svg></CaptionButton>
        <CaptionButton type="button" aria-label="Restore"><svg viewBox="0 0 8 8"><path d="M3 1h4v4H3zM1 3h4v4H1z" fill="none" stroke="#dce7ff" /></svg></CaptionButton>
        <CaptionButton type="button" aria-label="Close" $danger><svg viewBox="0 0 8 8"><path d="M1.500 1.500l5 5M6.500 1.500l-5 5" stroke="#fff" strokeWidth="1.500" /></svg></CaptionButton>
      </TitleBar>
      <MenuBar>{MENUS.map((m) => <button type="button" key={m}>{m}</button>)}</MenuBar>
      <CommandLine>
        <p>Autosave completed successfully</p>
        <SpinButton type="button" aria-label="Scroll history"><svg viewBox="0 0 8 8"><path d="M2 3l2-2 2 2M2 5l2 2 2-2" fill="none" stroke="#3b62b4" /></svg></SpinButton>
      </CommandLine>
      <CommandLine $bold>
        <label htmlFor="command">Command:</label>
        <input id="command" type="text" />
        <SpinButton type="button" aria-label="Lines"><svg viewBox="0 0 8 8"><path d="M2 3l2-2 2 2M2 5l2 2 2-2" fill="none" stroke="#26427c" strokeWidth="1.300" /></svg></SpinButton>
        <SpinButton type="button" aria-label="Scroll left"><svg viewBox="0 0 8 8"><path d="M5 2L3 4l2 2" fill="none" stroke="#26427c" strokeWidth="1.500" /></svg></SpinButton>
        <SpinButton type="button" aria-label="Track"><svg viewBox="0 0 8 8"><path d="M3 0h5v8H3z" fill="#fff" /></svg></SpinButton>
        <SpinButton type="button" aria-label="Scroll right"><svg viewBox="0 0 8 8"><path d="M3 2l2 2-2 2" fill="none" stroke="#26427c" strokeWidth="1.500" /></svg></SpinButton>
        <svg width="6" height="8" viewBox="0 0 6 8"><path d="M0 0h6v8H0z" fill={BEIGE} /></svg>
      </CommandLine>
      <ToolRow>
        <Strip width={348} names="new open save print doc cut copy paste undo pan rotate zoom zoomw zoome zooms back grid car layers circ select bulb lock shade wheel sphere sphere2 ball ball spot gear dim help" />
      </ToolRow>
      <ToolRow>
        <Strip width={45} names="cplane cplane2 cplane3 cplane4" />
        <Strip width={55} after={25} names="film film2 film3 film4 pane" />
        <Strip width={54} after={9} names="tex tex2 tex3 rgb tex4" />
        <Strip width={118} names="mA mB mC mD mE mG mH mI mJ mK open" />
      </ToolRow>
      <Main>
        <Palette>
          {PALETTE.flatMap((row) => {
            const n = row.split(" ");
            return [
              <PalettePair key={row + "l"}><Tool name={n[0]} />{n[2] && <Tool name={n[2]} />}</PalettePair>,
              <PalettePair key={row + "r"}><Tool name={n[1]} />{n[3] && <Tool name={n[3]} />}</PalettePair>,
            ];
          })}
        </Palette>
        <Center>
          <UpperViews>
            <Viewport><TopDrawing /><ViewLabel type="button" $active>Top</ViewLabel></Viewport>
            <Backdrop>
              <RenderView><RenderDrawing /><ViewLabel type="button">I</ViewLabel></RenderView>
            </Backdrop>
          </UpperViews>
          <LowerViews>
            <Viewport><FrontDrawing /><ViewLabel type="button">Front</ViewLabel></Viewport>
            <Viewport><RightDrawing /><ViewLabel type="button">Right</ViewLabel></Viewport>
          </LowerViews>
          <SheetTabs role="tablist">
            <svg viewBox="0 0 24 4"><path d="M0 0v4M3 0L1 2l2 2zM9 0L7 2l2 2zM13 0l2 2-2 2zM19 0l2 2-2 2zM22 0v4" fill="#aaa797" stroke="#aaa797" strokeWidth="0.500" /></svg>
            <span>\</span>
            <button type="button" role="tab" aria-selected="false">1</button>
            <span>\</span>
            <button type="button" role="tab" aria-selected="true">Top</button>
            <span>/</span>
            <button type="button" role="tab" aria-selected="false">Front</button>
            <span>/</span>
            <button type="button" role="tab" aria-selected="false">Right</button>
            <span>/</span>
          </SheetTabs>
        </Center>
        <Properties />
      </Main>
      <SnapBar>
        {SNAPS.map((s) => (
          <label key={s}><Tick defaultChecked={s === "End" || s === "Mid"} />{s}</label>
        ))}
      </SnapBar>
      <StatusBar>
        <StatusCell $width={18}>CPlane</StatusCell>
        <StatusCell $width={33}>x 48.772</StatusCell>
        <StatusCell $width={33}>y -1.019</StatusCell>
        <StatusCell $width={33}>z 0.000</StatusCell>
        <StatusCell $width={34}>0.000</StatusCell>
        <StatusCell $width={63}><Swatch />Layer 01</StatusCell>
        <StatusToggle type="button">Snap</StatusToggle>
        <StatusToggle type="button">Ortho</StatusToggle>
        <StatusToggle type="button">Planar</StatusToggle>
        <StatusToggle type="button" $on>Osnap</StatusToggle>
        <StatusToggle type="button" $on>Record History</StatusToggle>
      </StatusBar>
    </Window>
  );
}
